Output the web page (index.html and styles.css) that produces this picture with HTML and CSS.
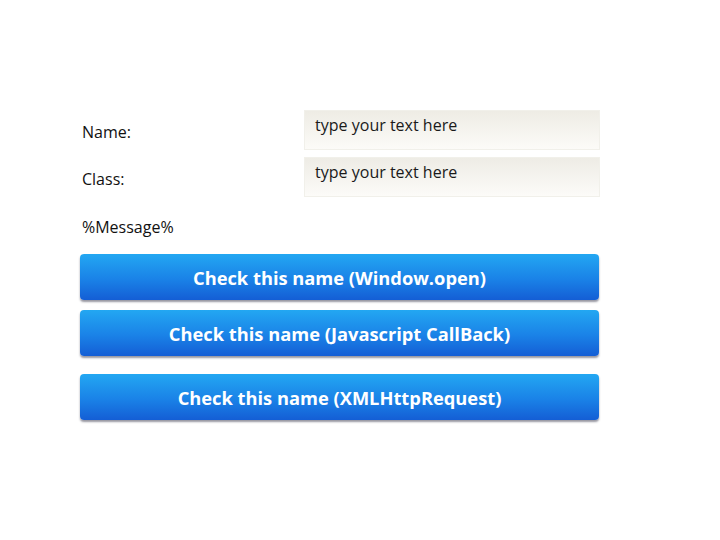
FILE: index.html
```html
<!DOCTYPE html>
<html>
<head>
<meta charset="utf-8">
<link rel="stylesheet" href="styles.css">
</head>
<body>
<div class="page">
  <div class="form">
    <div class="row">
      <label class="label">Name:</label>
      <div class="field">type your text here</div>
    </div>
    <div class="row">
      <label class="label">Class:</label>
      <div class="field">type your text here</div>
    </div>
    <div class="message">%Message%</div>
    <div class="btn b1">Check this name (Window.open)</div>
    <div class="btn b2">Check this name (Javascript CallBack)</div>
    <div class="btn b3">Check this name (XMLHttpRequest)</div>
  </div>
</div>
</body>
</html>
```
FILE: styles.css
```css
html, body {
  margin: 0;
  padding: 0;
  background: #ffffff;
}
.page {
  width: 720px;
  height: 540px;
  padding: 110px 0 0 80px;
  box-sizing: border-box;
  font-family: "Open Sans", "DejaVu Sans", sans-serif;
  color: #111;
}
.form {
  width: 520px;
  display: flex;
  flex-direction: column;
}
.row {
  display: flex;
  align-items: center;
  height: 40px;
  margin-bottom: 7px;
}
.label {
  width: 223px;
  padding-left: 2px;
  padding-top: 4px;
  font-size: 16px;
}
.field {
  width: 297px;
  height: 40px;
  box-sizing: border-box;
  border: 1px solid #f1f0ea;
  background: linear-gradient(#eeece5, #fcfbf8);
  padding: 3px 10px;
  font-size: 16px;
  color: #1a1a1a;
}
.message {
  padding-left: 2px;
  margin-top: 12px;
  height: 38px;
  font-size: 16px;
}
.btn {
  width: 519px;
  height: 46px;
  box-sizing: border-box;
  border-radius: 4px;
  background: linear-gradient(#23a7f2, #1a82e7 55%, #145ed5);
  box-shadow: 0 2px 2px rgba(50, 50, 70, 0.5);
  color: #fff;
  font-weight: bold;
  font-size: 18.3px;
  display: flex;
  align-items: center;
  justify-content: center;
}
.b2 {
  margin-top: 10px;
}
.b3 {
  margin-top: 18px;
}
```
